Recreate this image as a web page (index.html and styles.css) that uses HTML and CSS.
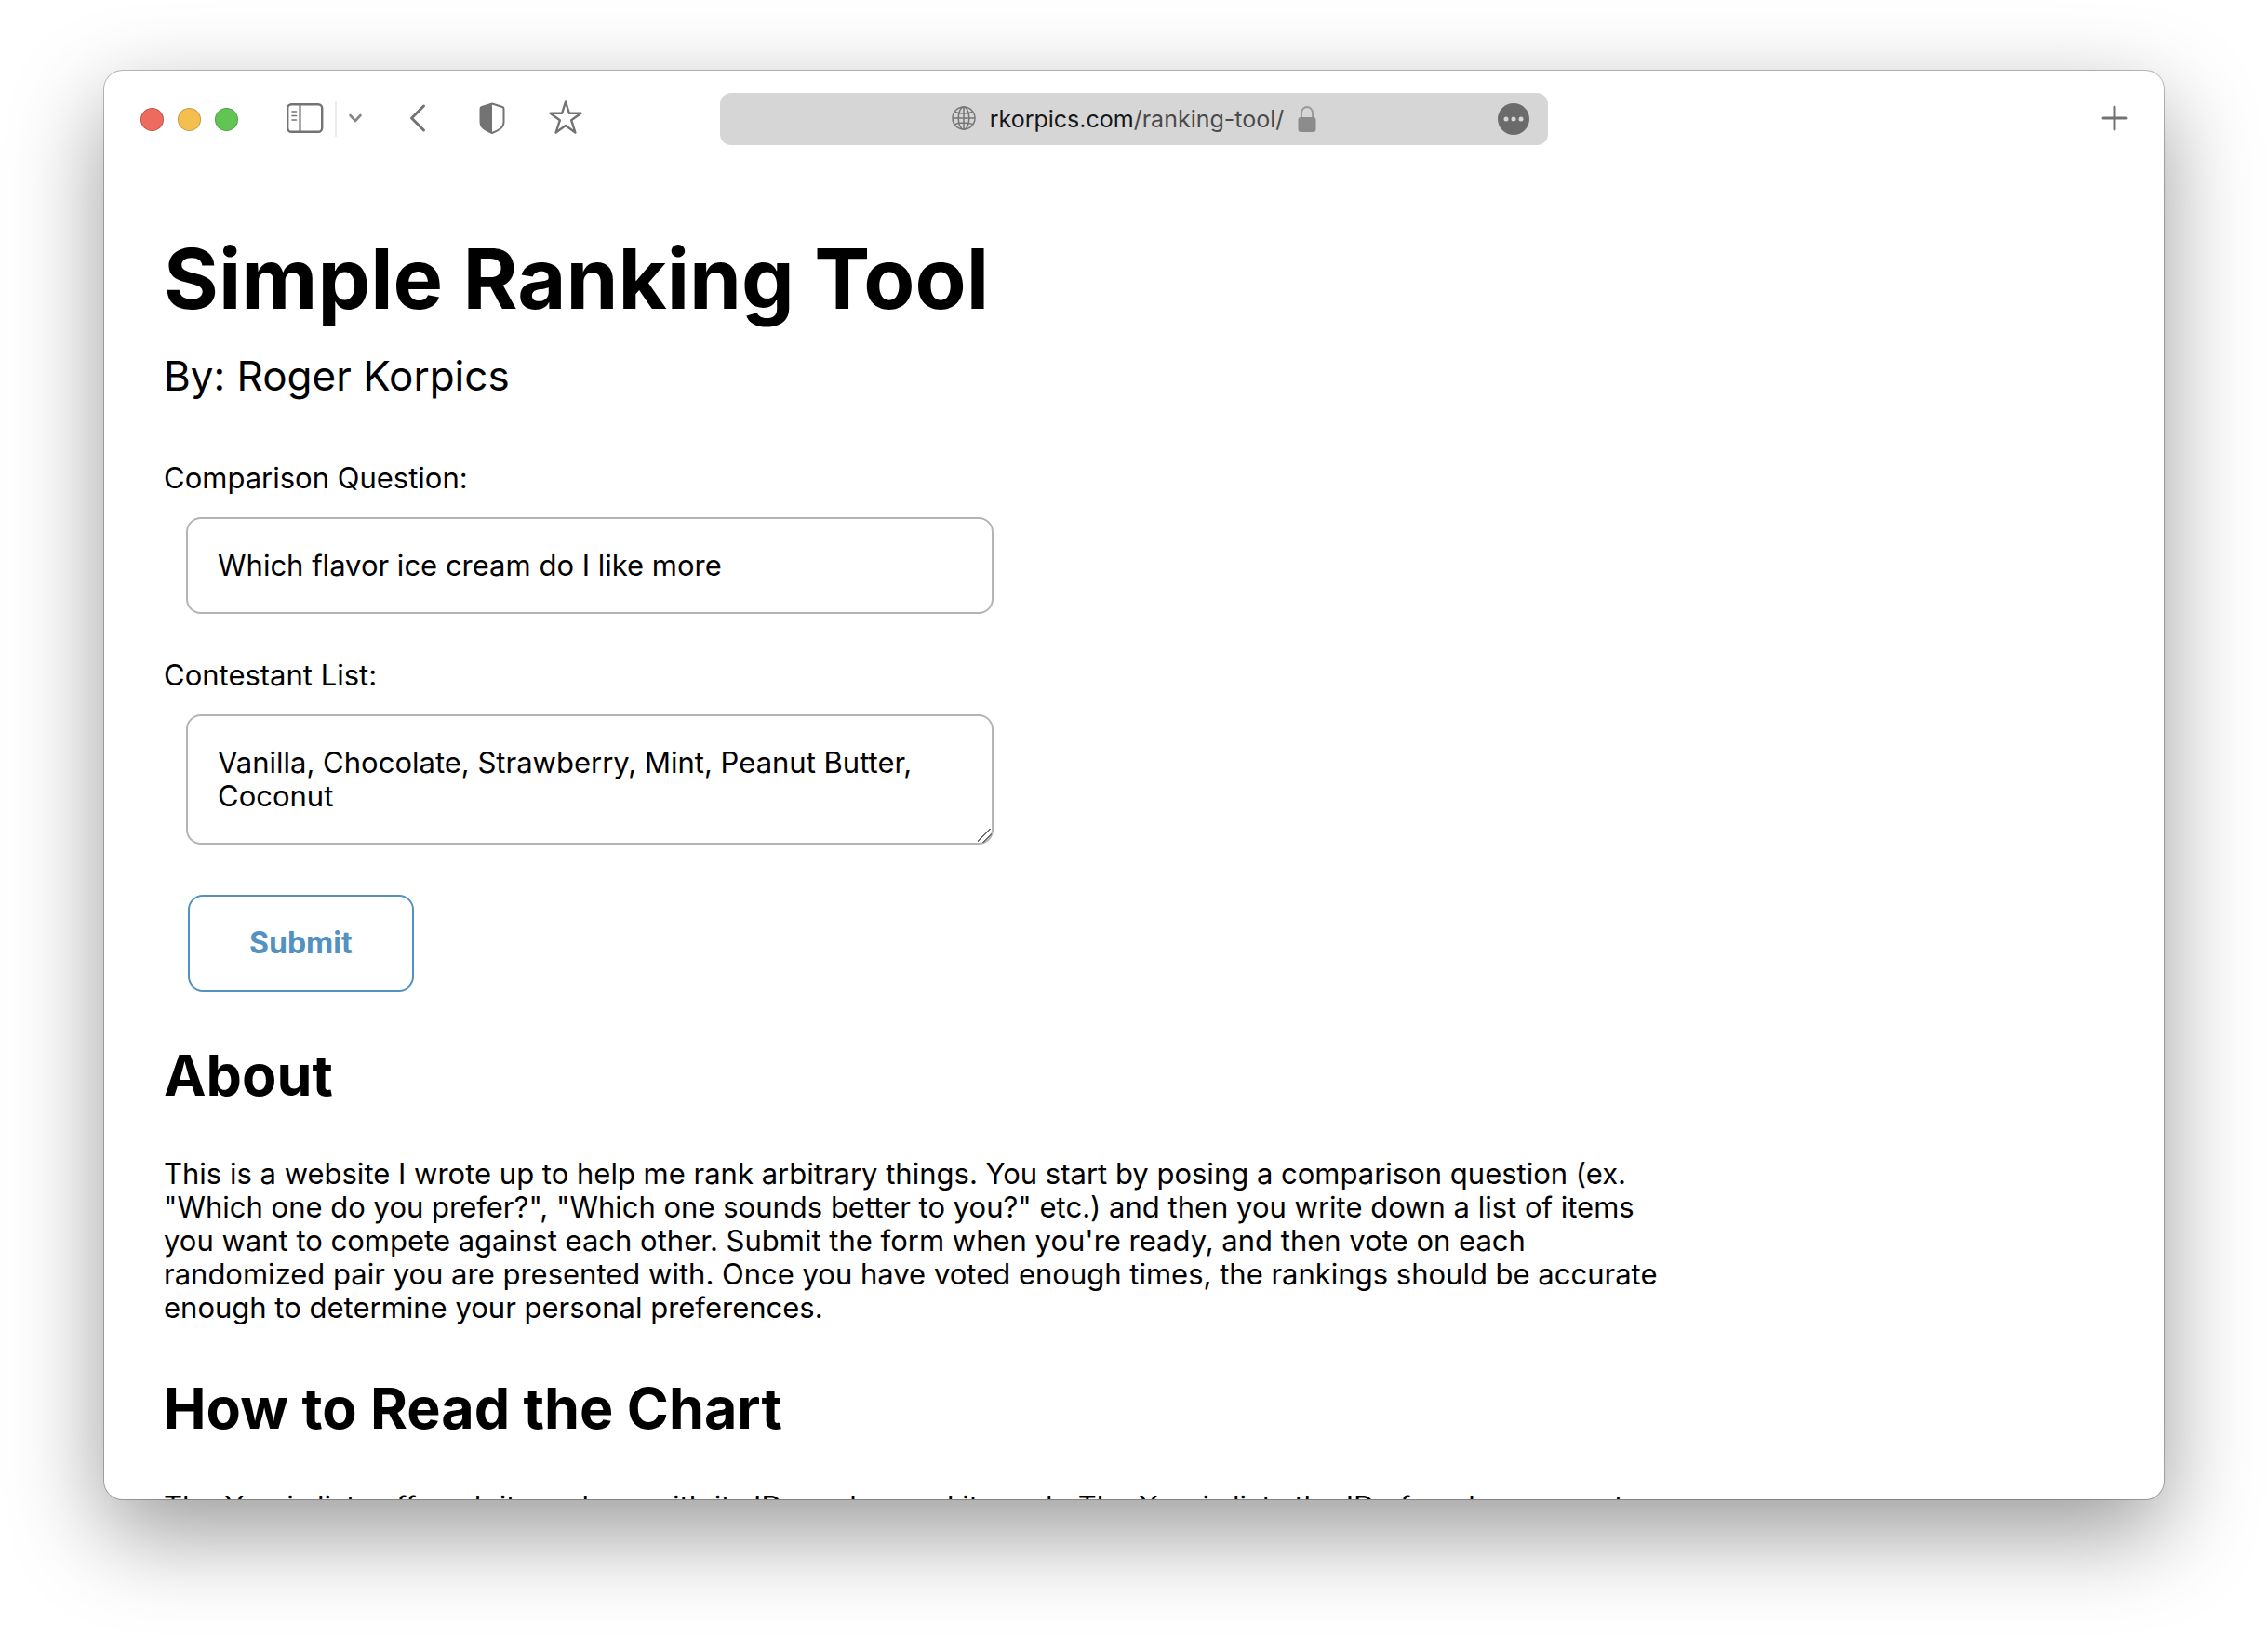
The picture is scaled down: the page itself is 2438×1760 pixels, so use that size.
FILE: index.html
```html
<!DOCTYPE html>
<html lang="en">
<head>
  <meta charset="UTF-8">
  <meta name="viewport" content="width=device-width, initial-scale=1.0">
  <title>Simple Ranking Tool</title>
  <link rel="stylesheet" href="styles.css">
</head>
<body>

<div class="window">
  <header class="toolbar">
    <div class="toolbar-left">
      <div class="lights">
        <button class="light red" aria-label="Close"></button>
        <button class="light yellow" aria-label="Minimize"></button>
        <button class="light green" aria-label="Zoom"></button>
      </div>
      <div class="sidebar-group">
        <button class="icon-btn" aria-label="Sidebar">
          <svg width="40" height="32" viewBox="0 0 40 32" fill="none" stroke="#737373">
            <rect x="1.2" y="1.2" width="37" height="29.600" rx="4" stroke-width="2.400"/>
            <path d="M14.500 2v28" stroke-width="2.200"/>
            <path d="M6 9h4.500M6 13.500h4.500M6 18h4.500" stroke-width="1.600" stroke-linecap="round"/>
          </svg>
        </button>
        <span class="divider"></span>
        <button class="icon-btn" aria-label="Tab groups">
          <svg width="16" height="12" viewBox="0 0 16 12" fill="none" stroke="#87878b" stroke-width="2.600" stroke-linecap="round" stroke-linejoin="round">
            <path d="M2.500 3L8 9l5.500-6"/>
          </svg>
        </button>
      </div>
      <button class="icon-btn back" aria-label="Back">
        <svg width="18" height="32" viewBox="0 0 18 32" fill="none" stroke="#737373" stroke-width="3" stroke-linecap="round" stroke-linejoin="round">
          <path d="M15.500 3L2.500 16l13 13"/>
        </svg>
      </button>
      <button class="icon-btn shield" aria-label="Privacy report">
        <svg width="28" height="34" viewBox="0 0 28 34">
          <path d="M14 1.500L25 5q1.500.500 1.500 2v14q0 5-4.500 8-3.500 2.400-8 4-4.500-1.600-8-4-4.500-3-4.500-8V7q0-1.500 1.500-2z" fill="none" stroke="#737373" stroke-width="2"/>
          <path d="M14 1v32q-4.500-1.600-8-4-4.500-3-4.500-8V7q0-1.500 1.500-2z" fill="#737373"/>
        </svg>
      </button>
      <button class="icon-btn star" aria-label="Favorites">
        <svg width="36" height="38" viewBox="0 0 36 38" fill="none" stroke="#737373" stroke-width="2.400" stroke-linejoin="round">
          <path d="M18 1.500L21.800 13.700h12.700L24.200 21.300 28.400 34.500 18 27 7.600 34.500l4.200-13.200L1.500 13.700H14.200z"/>
        </svg>
      </button>
    </div>
    <div class="address">
      <div class="url">
        <svg class="globe" width="26" height="26" viewBox="0 0 26 26" fill="none" stroke="#757575" stroke-width="1.500">
          <circle cx="13" cy="13" r="12"/>
          <ellipse cx="13" cy="13" rx="5.800" ry="12"/>
          <path d="M13 1v24M1 13h24M3.500 6.500q9.500 3 19 0M3.500 19.500q9.500-3 19 0"/>
        </svg>
        <span class="host">rkorpics.com<span class="path">/ranking-tool/</span></span>
        <svg class="lock" width="20" height="28" viewBox="0 0 20 28">
          <path d="M4 13V7.500a6 6.500 0 0 1 12 0V13" fill="none" stroke="#9a9a9a" stroke-width="2"/>
          <rect x="0.500" y="12" width="19" height="16" rx="3" fill="#8c8c8c"/>
        </svg>
      </div>
      <button class="icon-btn more" aria-label="Page menu">
        <svg width="34" height="34" viewBox="0 0 34 34">
          <circle cx="17" cy="17" r="17" fill="#6b6b6b"/>
          <g fill="#d6d6d6"><circle cx="9" cy="17" r="2.500"/><circle cx="17" cy="17" r="2.500"/><circle cx="25" cy="17" r="2.500"/></g>
        </svg>
      </button>
    </div>
    <div class="toolbar-right">
      <button class="icon-btn" aria-label="New tab">
        <svg width="28" height="28" viewBox="0 0 28 28" stroke="#737373" stroke-width="3" stroke-linecap="round">
          <path d="M14 2v24M2 14h24"/>
        </svg>
      </button>
    </div>
  </header>

  <main class="page">
    <h1>Simple Ranking Tool</h1>
    <p class="author">By: Roger Korpics</p>

    <form class="ranking-form">
      <label for="question">Comparison Question:</label>
      <input type="text" id="question" class="field" value="Which flavor ice cream do I like more">
      <label for="contestants">Contestant List:</label>
      <textarea id="contestants" class="field" rows="2">Vanilla, Chocolate, Strawberry, Mint, Peanut Butter, Coconut</textarea>
      <button type="submit" class="submit">Submit</button>
    </form>

    <h2>About</h2>
    <p>This is a website I wrote up to help me rank arbitrary things. You start by posing a comparison question (ex. "Which one do you prefer?", "Which one sounds better to you?" etc.) and then you write down a list of items you want to compete against each other. Submit the form when you're ready, and then vote on each randomized pair you are presented with. Once you have voted enough times, the rankings should be accurate enough to determine your personal preferences.</p>

    <h2>How to Read the Chart</h2>
    <p>The Y-axis lists off each item along with its ID number and its rank. The X-axis lists the ID of each opponent</p>
  </main>
</div>

</body>
</html>
```
FILE: styles.css
```css
* {
  box-sizing: border-box;
}
body {
  margin: 0;
  height: 100vh;
  padding: 76px 112px 148px;
  background-color: #fff;
  color: #000;
  font-family: Inter, "Liberation Sans", sans-serif;
  font-size: 31px;
  line-height: 36px;
}
.window {
  height: 100%;
  overflow: hidden;
  background-color: #fff;
  border-radius: 20px;
  box-shadow: 0 0 0 1px rgba(0, 0, 0, 0.25), 0 36px 100px rgba(0, 0, 0, 0.4);
}

/* browser toolbar */
.toolbar {
  display: grid;
  grid-template-columns: 1fr 890px 1fr;
  align-items: center;
  height: 104px;
  padding: 0 39px;
}
.toolbar-left,
.lights,
.sidebar-group,
.url {
  display: flex;
  align-items: center;
}
.lights {
  gap: 15px;
}
.light {
  width: 25px;
  height: 25px;
  padding: 0;
  border: 1px solid rgba(0, 0, 0, 0.2);
  border-radius: 50%;
}
.red {
  background-color: #ed6a5e;
}
.yellow {
  background-color: #f5bf4f;
}
.green {
  background-color: #61c554;
}
.icon-btn {
  display: flex;
  margin-bottom: 2px;
  padding: 0;
  border: none;
  background: none;
}
.sidebar-group {
  gap: 12px;
  margin-left: 52px;
}
.divider {
  width: 2px;
  height: 38px;
  background-color: #ececec;
}
.back {
  margin-left: 50px;
}
.shield {
  margin-left: 57px;
}
.star {
  margin-left: 47px;
}
.address {
  position: relative;
  display: flex;
  align-items: center;
  justify-content: center;
  height: 56px;
  border-radius: 12px;
  background-color: #d6d6d6;
}
.url {
  gap: 15px;
  font-size: 25px;
}
.globe {
  margin-bottom: 2px;
}
.host {
  color: #161616;
}
.path {
  color: #4a4a4a;
}
.more {
  position: absolute;
  right: 20px;
  margin: 0;
}
.toolbar-right {
  display: flex;
  justify-content: flex-end;
}

/* page content */
.page {
  max-width: 1684px;
  padding: 64px 0 0 64px;
}
h1 {
  margin: 0;
  font-size: 90px;
  line-height: 112px;
}
h2 {
  margin: 0 0 50px;
  font-size: 61px;
  line-height: 76px;
}
p {
  margin: 0 0 52px;
}
.author {
  margin: 20px 0 64px;
  font-size: 44px;
  line-height: 56px;
}
.ranking-form {
  display: flex;
  flex-direction: column;
  align-items: flex-start;
  margin-bottom: 52px;
}
.field {
  width: 868px;
  margin: 24px 24px 48px;
  padding: 32px;
  border: 2px solid #b4b4b4;
  border-radius: 16px;
  background-color: #fff;
  color: #000;
  font: inherit;
}
.field::-webkit-resizer {
  background: linear-gradient(135deg, transparent 41%, #6e6e6e 42%, #6e6e6e 48%, transparent 49%, transparent 64%, #6e6e6e 65%, #6e6e6e 71%, transparent 72%);
}
.submit {
  margin: 6px 26px 0;
  padding: 32px 64px;
  border: 2px solid #5391c0;
  border-radius: 16px;
  background-color: #fff;
  color: #5391c0;
  font: inherit;
  font-size: 32px;
  font-weight: bold;
}
```
